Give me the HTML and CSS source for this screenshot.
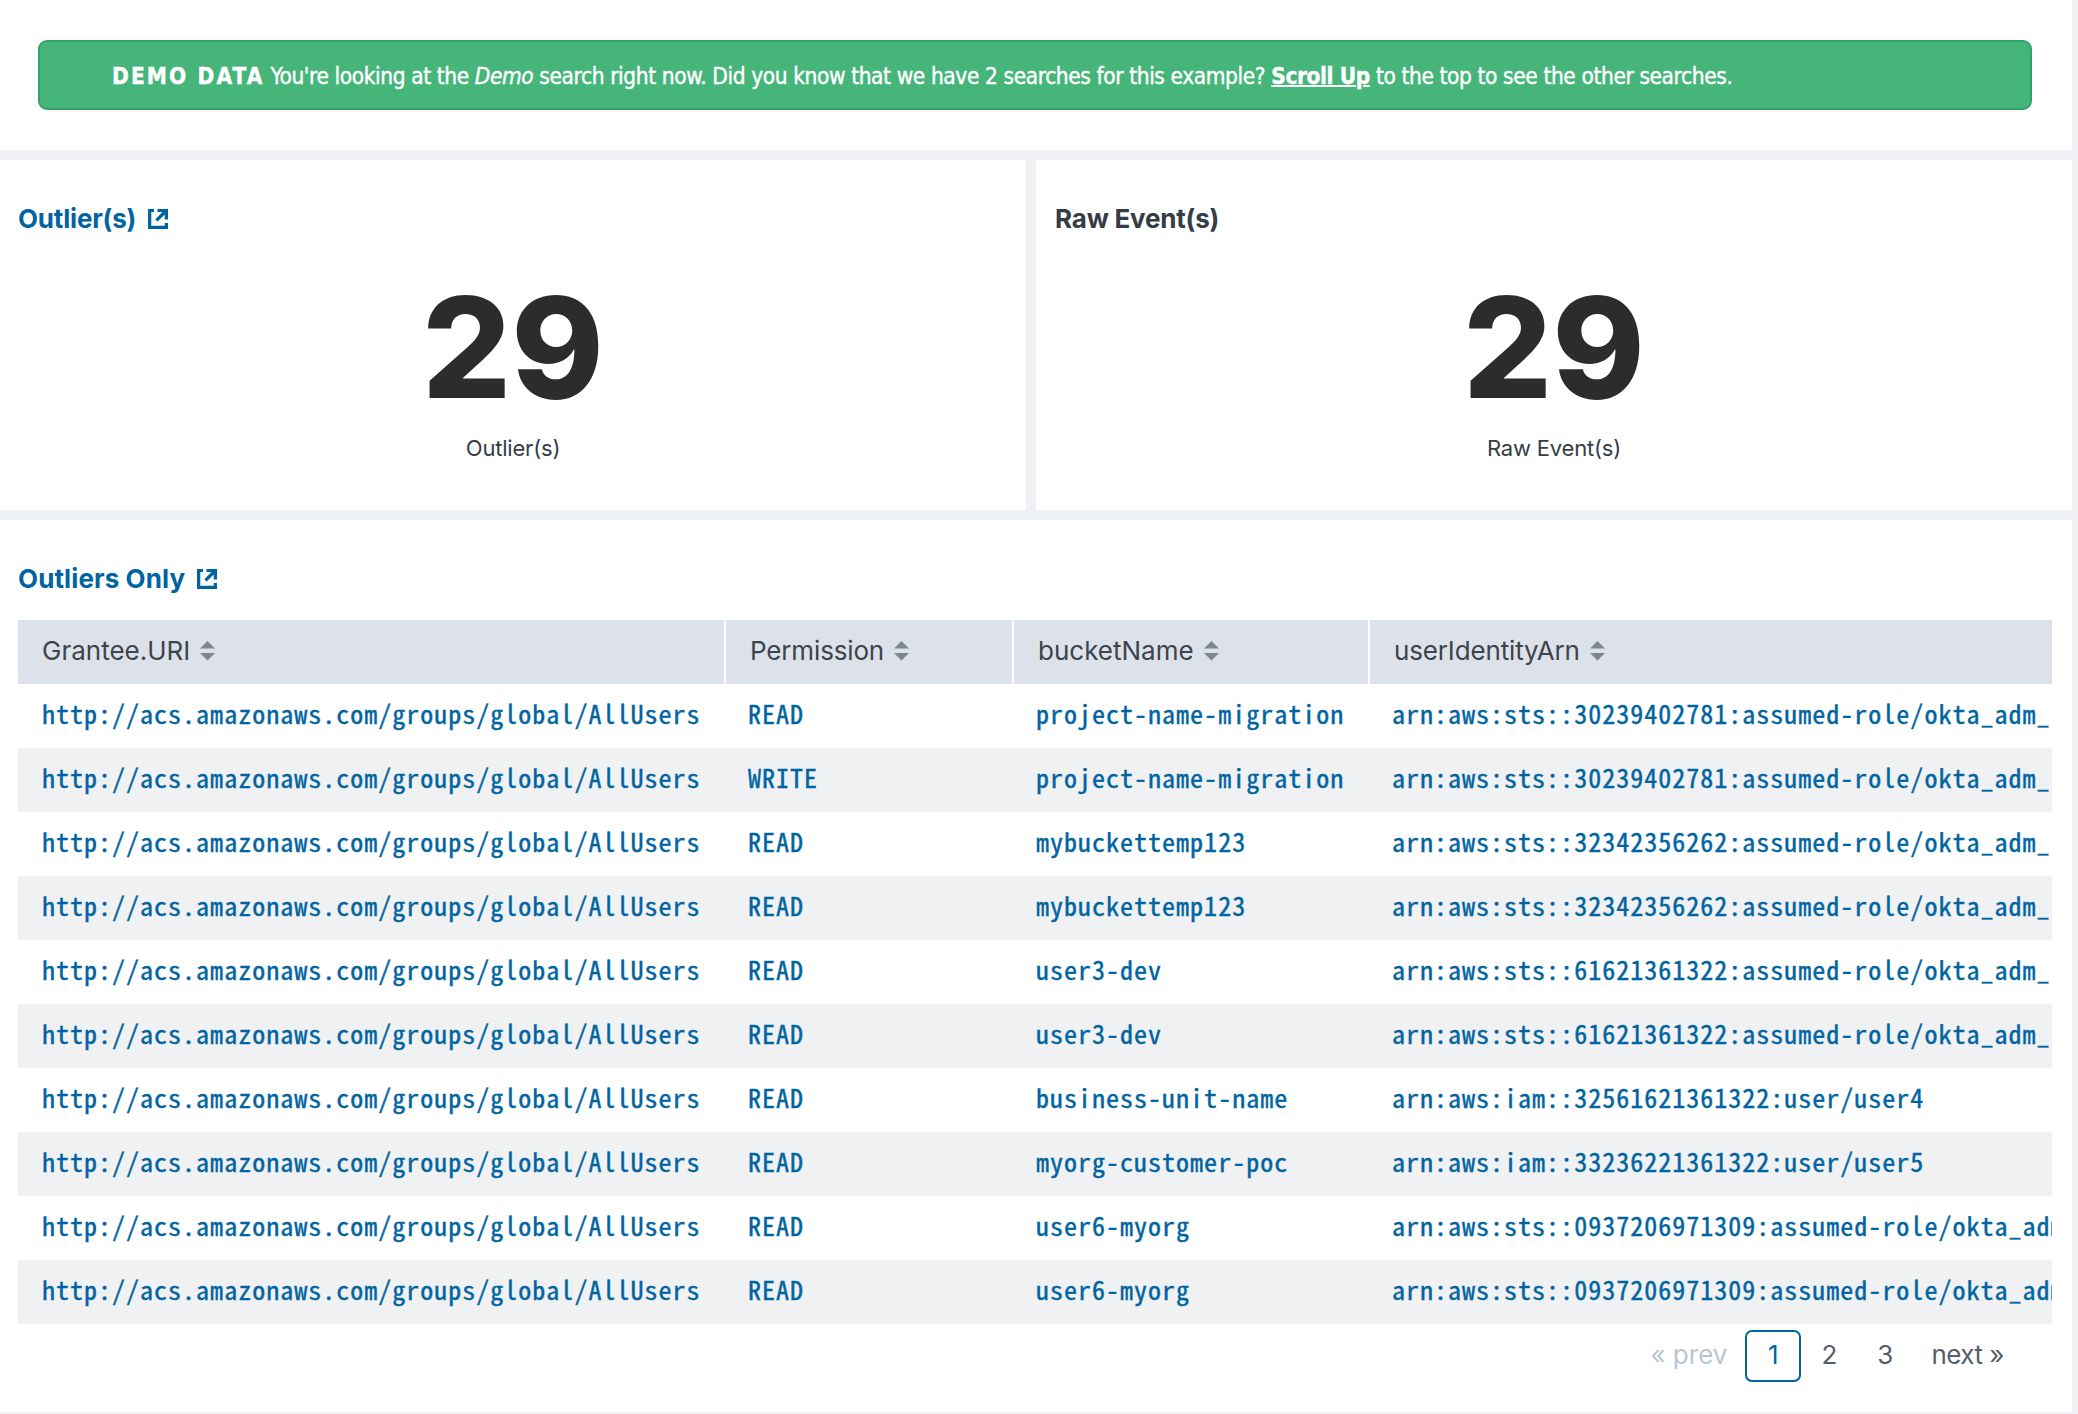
FILE: index.html
```html
<!DOCTYPE html>
<html lang="en">
<head>
<meta charset="utf-8">
<title>Outliers</title>
<link rel="stylesheet" href="styles.css">
</head>
<body>
<svg class="defs" aria-hidden="true">
  <symbol id="open" viewBox="0 0 20 20"><path d="M0 0h6v3H3.300v13.700h13.400V14H20v6H0zM9.500 0H20v10.500h-3.300V5.600L9.700 12.600 7.300 10.200 14.500 3H9.500z"/></symbol>
  <symbol id="sort" viewBox="0 0 15 20"><path d="M7.500 0L15 7.500H0zM0 12h15L7.500 19.500z"/></symbol>
</svg>
<main class="dashboard">
  <section class="panel notice">
    <div class="alert"><strong class="alert-label">DEMO DATA</strong> You're looking at the <em>Demo</em> search right now. Did you know that we have 2 searches for this example? <a class="alert-link" href="#">Scroll Up</a> to the top to see the other searches.</div>
  </section>
  <div class="row">
    <section class="panel single">
      <h2 class="title link">Outlier(s) <svg class="open"><use href="#open"/></svg></h2>
      <div class="value">29</div>
      <div class="label">Outlier(s)</div>
    </section>
    <section class="panel single">
      <h2 class="title">Raw Event(s)</h2>
      <div class="value">29</div>
      <div class="label">Raw Event(s)</div>
    </section>
  </div>
  <section class="panel results">
    <h2 class="title link">Outliers Only <svg class="open"><use href="#open"/></svg></h2>
    <div class="table-wrap">
      <table class="table">
        <colgroup><col class="c-uri"><col class="c-perm"><col class="c-bucket"><col class="c-arn"></colgroup>
        <thead>
          <tr>
            <th>Grantee.URI<svg class="sort"><use href="#sort"/></svg></th>
            <th><span class="tight">Permission</span><svg class="sort"><use href="#sort"/></svg></th>
            <th>bucketName<svg class="sort"><use href="#sort"/></svg></th>
            <th><span class="tight">userIdentityArn</span><svg class="sort"><use href="#sort"/></svg></th>
          </tr>
        </thead>
        <tbody>
          <tr><td>http://acs.amazonaws.com/groups/global/AllUsers</td><td>READ</td><td>project-name-migration</td><td>arn:aws:sts::30239402781:assumed-role/okta_adm_</td></tr>
          <tr><td>http://acs.amazonaws.com/groups/global/AllUsers</td><td>WRITE</td><td>project-name-migration</td><td>arn:aws:sts::30239402781:assumed-role/okta_adm_</td></tr>
          <tr><td>http://acs.amazonaws.com/groups/global/AllUsers</td><td>READ</td><td>mybuckettemp123</td><td>arn:aws:sts::32342356262:assumed-role/okta_adm_</td></tr>
          <tr><td>http://acs.amazonaws.com/groups/global/AllUsers</td><td>READ</td><td>mybuckettemp123</td><td>arn:aws:sts::32342356262:assumed-role/okta_adm_</td></tr>
          <tr><td>http://acs.amazonaws.com/groups/global/AllUsers</td><td>READ</td><td>user3-dev</td><td>arn:aws:sts::61621361322:assumed-role/okta_adm_</td></tr>
          <tr><td>http://acs.amazonaws.com/groups/global/AllUsers</td><td>READ</td><td>user3-dev</td><td>arn:aws:sts::61621361322:assumed-role/okta_adm_</td></tr>
          <tr><td>http://acs.amazonaws.com/groups/global/AllUsers</td><td>READ</td><td>business-unit-name</td><td>arn:aws:iam::32561621361322:user/user4</td></tr>
          <tr><td>http://acs.amazonaws.com/groups/global/AllUsers</td><td>READ</td><td>myorg-customer-poc</td><td>arn:aws:iam::33236221361322:user/user5</td></tr>
          <tr><td>http://acs.amazonaws.com/groups/global/AllUsers</td><td>READ</td><td>user6-myorg</td><td>arn:aws:sts::0937206971309:assumed-role/okta_adm</td></tr>
          <tr><td>http://acs.amazonaws.com/groups/global/AllUsers</td><td>READ</td><td>user6-myorg</td><td>arn:aws:sts::0937206971309:assumed-role/okta_adm</td></tr>
        </tbody>
      </table>
    </div>
    <nav class="pages">
      <span class="page disabled">« prev</span>
      <span class="page num active">1</span>
      <span class="page num">2</span>
      <span class="page num">3</span>
      <span class="page next">next »</span>
    </nav>
  </section>
</main>
</body>
</html>
```
FILE: styles.css
```css
* { box-sizing: border-box; }

body {
  margin: 0;
  background: #f0f1f4;
  color: #343d46;
  font-family: Inter, "Liberation Sans", sans-serif;
}

.defs { display: none; }

.dashboard {
  display: flex;
  flex-direction: column;
  gap: 10px;
  height: 1414px;
  padding: 0 6px 2px 0;
  overflow: hidden;
}

.panel { background: #fff; }

.notice { height: 150px; padding: 40px 40px 40px 38px; }

.alert {
  height: 70px;
  padding: 3px 0 0 72px;
  border: 2px solid #30a467;
  border-radius: 9px;
  background: #45b57a;
  color: #fff;
  font: 22.5px/62px "DejaVu Sans Condensed", "DejaVu Sans", sans-serif;
  font-stretch: condensed;
  letter-spacing: -0.4px;
  white-space: nowrap;
  -webkit-text-stroke: 0.4px #fff;
}

.alert-label { letter-spacing: 2.1px; }
.alert-link { color: inherit; font-weight: bold; text-decoration-thickness: 2px; }

.row {
  display: grid;
  grid-template-columns: 1026px 1fr;
  gap: 10px;
  height: 350px;
}

.single { padding-top: 38px; }

.title {
  display: flex;
  align-items: center;
  gap: 12px;
  margin: 0 0 0 18px;
  font-size: 26px;
  font-weight: 700;
  line-height: 41px;
  letter-spacing: 0.1px;
}

.single .title { letter-spacing: -0.2px; }
.single + .single .title { margin-left: 19px; }
.link { color: #0064a1; }

.open { width: 20px; height: 20px; fill: currentColor; }

.value {
  margin-top: 23px;
  color: #2c2c2c;
  font-size: 140px;
  font-weight: 800;
  line-height: 170px;
  text-align: center;
}

.label {
  margin-top: 3px;
  font-size: 22px;
  line-height: 26px;
  letter-spacing: -0.2px;
  text-align: center;
}

.results { flex: 1; padding: 38px 20px 0 18px; }
.results .title { margin: 0 0 21px; }

.table-wrap { overflow: hidden; }

.table {
  width: 100%;
  border-spacing: 0;
  table-layout: fixed;
}

.c-uri { width: 708px; }
.c-perm { width: 288px; }
.c-bucket { width: 356px; }

th {
  height: 64px;
  padding: 0 0 3px 24px;
  border-right: 2px solid #fff;
  background: #dde1e9;
  color: #3c444d;
  font-size: 26px;
  font-weight: 400;
  line-height: 61px;
  text-align: left;
  white-space: nowrap;
}

th:last-child { border-right: 0; }
.tight { letter-spacing: -0.15px; }

.sort {
  width: 15px;
  height: 20px;
  margin-left: 10px;
  fill: #7b8794;
  vertical-align: -1px;
}

td {
  height: 64px;
  padding: 0 0 7px 22px;
  color: #0064a1;
  font: 26px/57px "Noto Sans Mono CJK SC", "DejaVu Sans Mono", monospace;
  letter-spacing: 1.01px;
  white-space: nowrap;
  -webkit-text-stroke: 0.4px #0064a1;
}

td:first-child { padding-left: 24px; }
tbody tr:nth-child(even) { background: #f0f1f3; }

.pages {
  display: flex;
  justify-content: flex-end;
  margin: 6px 30px 0 0;
  color: #555e69;
  font-size: 26px;
  line-height: 45px;
}

.page {
  height: 52px;
  padding: 0 16px;
  border: 2px solid transparent;
  border-radius: 7px;
}

.num { width: 56px; padding: 0; text-align: center; }
.active { border-color: #0064a1; color: #0064a1; }
.disabled { color: #bcc4d0; }
.next { letter-spacing: -0.5px; }
```
